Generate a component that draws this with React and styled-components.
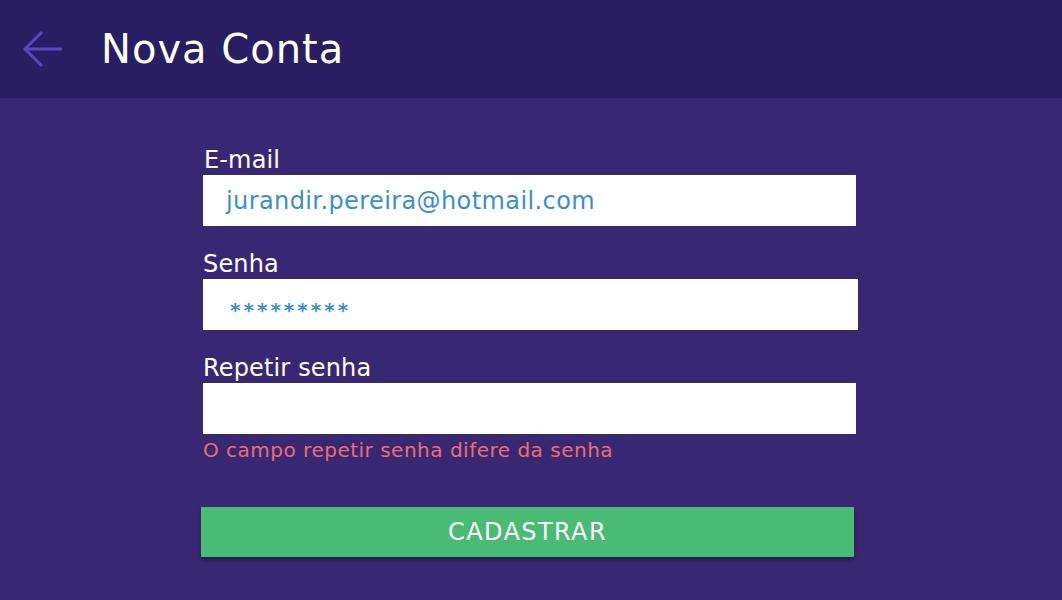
import React from "react";
import styled, { createGlobalStyle } from "styled-components";

const Global = createGlobalStyle`
  html, body { margin: 0; padding: 0; }
  body {
    background: #382873;
    font-family: "DejaVu Sans", "Open Sans", sans-serif;
    width: 1062px;
    height: 600px;
    overflow: hidden;
  }
`;

const Page = styled.div`
  width: 1062px;
  height: 600px;
  background: #382873;
  display: flex;
  flex-direction: column;
`;

const Header = styled.header`
  height: 98px;
  flex-shrink: 0;
  background: #2a1e62;
  display: flex;
  align-items: center;
  padding-left: 22px;
  gap: 37px;
  box-sizing: border-box;
`;

const BackButton = styled.button`
  background: none;
  border: none;
  padding: 0;
  width: 42px;
  height: 40px;
  display: flex;
  align-items: center;
  justify-content: center;
  cursor: pointer;
`;

const Title = styled.h1`
  margin: 0;
  color: #ffffff;
  font-size: 40px;
  font-weight: 400;
  letter-spacing: 1px;
  line-height: 1;
`;

const Form = styled.form`
  width: 656px;
  margin: 0 auto;
  padding-top: 47px;
  display: flex;
  flex-direction: column;
`;

const Field = styled.div`
  display: flex;
  flex-direction: column;
  margin-bottom: ${(p) => p.$mb ?? 23}px;
`;

const Label = styled.label`
  color: #ffffff;
  font-size: 24px;
  line-height: 30px;
  letter-spacing: 0.15px;
  padding-left: ${(p) => p.$pl || 0}px;
`;

const Input = styled.div`
  background: #ffffff;
  height: 51px;
  width: ${(p) => p.$w || 653}px;
  box-sizing: border-box;
  display: flex;
  align-items: center;
  padding-left: 23px;
  color: #3a8fcb;
  font-size: 24px;
  letter-spacing: 0.4px;
`;

const Stars = styled.span`
  font-size: 20px;
  letter-spacing: 3px;
  padding-left: 4px;
  padding-top: 10px;
  font-weight: 700;
`;

const Error = styled.div`
  color: #f06b70;
  font-size: 20px;
  letter-spacing: 0.5px;
  line-height: 26px;
  margin-top: 3px;
`;

const Submit = styled.button`
  margin-top: 44px;
  margin-left: -2px;
  width: 653px;
  height: 50px;
  background: #49bb75;
  border: none;
  color: #ffffff;
  font-family: inherit;
  font-size: 24px;
  letter-spacing: 1.4px;
  box-shadow: 0 3px 4px rgba(0, 0, 0, 0.35);
  cursor: pointer;
`;

export default function App() {
  return (
    <Page>
      <Global />
      <Header>
        <BackButton aria-label="Voltar">
          <svg width="40" height="38" viewBox="0 0 40 38" fill="none">
            <path d="M39 19H3M19 2L2 19l17 17" stroke="#5b46c2" strokeWidth="3" />
          </svg>
        </BackButton>
        <Title>Nova Conta</Title>
      </Header>
      <Form>
        <Field>
          <Label $pl={1}>E-mail</Label>
          <Input>jurandir.pereira@hotmail.com</Input>
        </Field>
        <Field>
          <Label>Senha</Label>
          <Input $w={655}>
            <Stars>*********</Stars>
          </Input>
        </Field>
        <Field $mb={0}>
          <Label>Repetir senha</Label>
          <Input />
          <Error>O campo repetir senha difere da senha</Error>
        </Field>
        <Submit type="button">CADASTRAR</Submit>
      </Form>
    </Page>
  );
}
